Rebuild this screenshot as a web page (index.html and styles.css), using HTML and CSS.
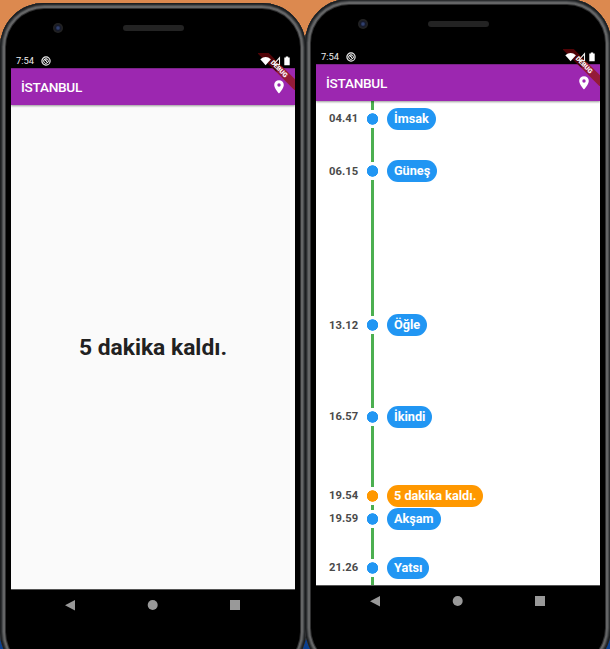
FILE: index.html
```html
<!DOCTYPE html>
<html lang="tr">
<head>
<meta charset="utf-8">
<title>İstanbul</title>
<link rel="stylesheet" href="styles.css">
</head>
<body>
<svg class="defs" width="0" height="0">
  <symbol id="sync" viewBox="0 0 10 10"><circle cx="5" cy="5" r="4.1" fill="none" stroke="#eee" stroke-width="1.2"/><path d="M2.7 4.4a2.4 2.4 0 0 1 4.6 0v1.8M2.8 4v2a2.4 2.4 0 0 0 3.4 1M3 3l4 4M4.2 3.8l2 .3" fill="none" stroke="#eee" stroke-width="1"/></symbol>
  <symbol id="status" viewBox="0 0 32 12"><path d="M.3 3.2Q5.6-1 10.9 3.2L5.6 9.3Z" fill="#fff"/><path d="M13.5 8.5L19.5 1.8v6.7z" fill="none" stroke="#eee" stroke-width="1.1"/><path d="M24.3 1.4h1.5V.4h2.4v1h1.5V9.3h-5.4z" fill="#fff"/></symbol>
  <symbol id="pin" viewBox="0 0 10 14"><path fill-rule="evenodd" d="M5 .2A4.8 4.8 0 0 0 .2 5C.2 8.5 5 13.6 5 13.6S9.8 8.5 9.8 5A4.8 4.8 0 0 0 5 .2zM5 3.3a1.7 1.7 0 1 1 0 3.4a1.7 1.7 0 0 1 0-3.4z" fill="#fff"/></symbol>
  <symbol id="nav" viewBox="0 0 284 32"><path d="M54 15.2L64 10v10.5z" fill="#999"/><circle cx="141.7" cy="15" r="5" fill="#999"/><path d="M219 10h10v10h-10z" fill="#999"/></symbol>
</svg>
<main class="stage">
  <section class="phone">
    <div class="bezel"><i class="camera"></i><i class="speaker"></i></div>
    <div class="screen">
      <div class="statusbar"><span>7:54</span><svg class="sync"><use href="#sync"/></svg><svg class="status"><use href="#status"/></svg></div>
      <header class="appbar"><h1>İSTANBUL</h1><svg class="pin"><use href="#pin"/></svg></header>
      <div class="body countdown"><p>5 dakika kaldı.</p></div>
      <svg class="nav"><use href="#nav"/></svg>
      <div class="banner"><b>DEBUG</b></div>
    </div>
  </section>
  <section class="phone raised">
    <div class="bezel"><i class="camera"></i><i class="speaker"></i></div>
    <div class="screen">
      <div class="statusbar"><span>7:54</span><svg class="sync"><use href="#sync"/></svg><svg class="status"><use href="#status"/></svg></div>
      <header class="appbar"><h1>İSTANBUL</h1><svg class="pin"><use href="#pin"/></svg></header>
      <div class="body timeline">
        <div class="row first"><time>04.41</time><i class="dot"></i><span class="pill">İmsak</span></div>
        <div class="row sunrise"><time>06.15</time><i class="dot"></i><span class="pill">Güneş</span></div>
        <div class="row noon"><time>13.12</time><i class="dot"></i><span class="pill">Öğle</span></div>
        <div class="row afternoon"><time>16.57</time><i class="dot"></i><span class="pill">İkindi</span></div>
        <div class="row now"><time>19.54</time><i class="dot"></i><span class="pill">5 dakika kaldı.</span></div>
        <div class="row sunset"><time>19.59</time><i class="dot"></i><span class="pill">Akşam</span></div>
        <div class="row night"><time>21.26</time><i class="dot"></i><span class="pill">Yatsı</span></div>
      </div>
      <svg class="nav"><use href="#nav"/></svg>
      <div class="banner"><b>DEBUG</b></div>
    </div>
  </section>
</main>
</body>
</html>
```
FILE: styles.css
```css
* { box-sizing: border-box; }
body { margin: 0; font-family: Roboto, sans-serif; background: linear-gradient(#dc894f 0 50%, #0b3f8f 50%); }
h1, p { margin: 0; }
.defs { display: block; height: 0; }
.stage { display: flex; width: 610px; height: 649px; overflow: hidden; padding-top: 3px; }
.phone { flex: none; width: 306px; height: 673px; padding: 0 11px; background: #000; border-radius: 44px;
  box-shadow: inset 0 0 0 1px #1c1e20, inset 0 0 0 2px #2c2e30, inset 0 0 0 3px #4a4c4e, inset 0 0 0 5px #646566, inset 0 0 0 6px #303031; }
.raised { margin: -4px 0 0 -1px; }
.bezel { height: 50px; display: flex; padding: 20px 0 0 42px; }
.camera { width: 10px; height: 10px; border-radius: 50%; background: radial-gradient(circle, #30406f 0 15%, #15192a 35%, #222 60%); }
.speaker { width: 61px; height: 6px; margin: 2px 0 0 60px; border-radius: 3px; background: #232323; }
.screen { position: relative; overflow: hidden; }
.statusbar { height: 15px; display: flex; color: #eee; font-size: 9.4px; line-height: 15px; padding-left: 5px; }
.statusbar span { width: 25px; }
.sync { width: 10px; height: 10px; margin-top: 2.5px; }
.status { position: relative; z-index: 2; width: 32px; height: 12px; margin: 3px 3px 0 auto; }
.appbar { position: relative; height: 37px; display: flex; align-items: center; justify-content: space-between; padding: 0 11px 0 10px; background: #9c27b0; box-shadow: 0 1px 2px #0006; border-top: 1px solid #7b2389; }
.appbar h1 { color: #fff; font-size: 13.6px; line-height: 20px; font-weight: 500; letter-spacing: -.28px; }
.pin { width: 10px; height: 14px; }
.body { height: 485px; background: #fafafa; border-bottom: 1px solid #555; }
.countdown { display: flex; align-items: center; justify-content: center; }
.countdown p { color: #212121; font-size: 22.8px; font-weight: 700; }
.timeline { overflow: hidden; background: linear-gradient(#4caf50, #4caf50) 55px 0 / 3px 100% no-repeat #fff; }
.row { display: flex; align-items: center; height: 22px; }
.row time { width: 42.3px; text-align: right; color: #4a4a4a; font-size: 11.2px; font-weight: 700; letter-spacing: .1px; }
.dot { width: 18px; height: 18px; margin-left: 4.7px; background: radial-gradient(circle at 9.5px 9px, #2196f3 5.4px, #fff 6px); }
.pill { height: 22px; line-height: 22px; padding: 0 7px 0 6.6px; margin-left: 6.4px; border-radius: 11px; background: #2196f3; color: #fff; font-size: 12.7px; font-weight: 700; }
.first { margin-top: 6.5px; }
.sunrise { margin-top: 30.5px; }
.noon { margin-top: 132px; }
.afternoon { margin-top: 69.5px; }
.now { margin-top: 57px; }
.sunset { margin-top: 1px; }
.night { margin-top: 27px; }
.now .dot { background: radial-gradient(circle at 9.5px 9px, #ff9800 5.4px, #fff 6px); }
.now .pill { background: #ff9800; }
.nav { display: block; width: 284px; height: 32px; }
.banner { position: absolute; z-index: 1; top: 0; right: 0; width: 37px; height: 37px; overflow: hidden; }
.banner b { position: absolute; top: 11.5px; left: -11px; width: 64px; height: 8px; transform: rotate(45deg); background: linear-gradient(90deg, #500306 48%, #941b38 52%); color: #fff; font-size: 6.6px; line-height: 8px; text-align: center; font-weight: 900; }
```
